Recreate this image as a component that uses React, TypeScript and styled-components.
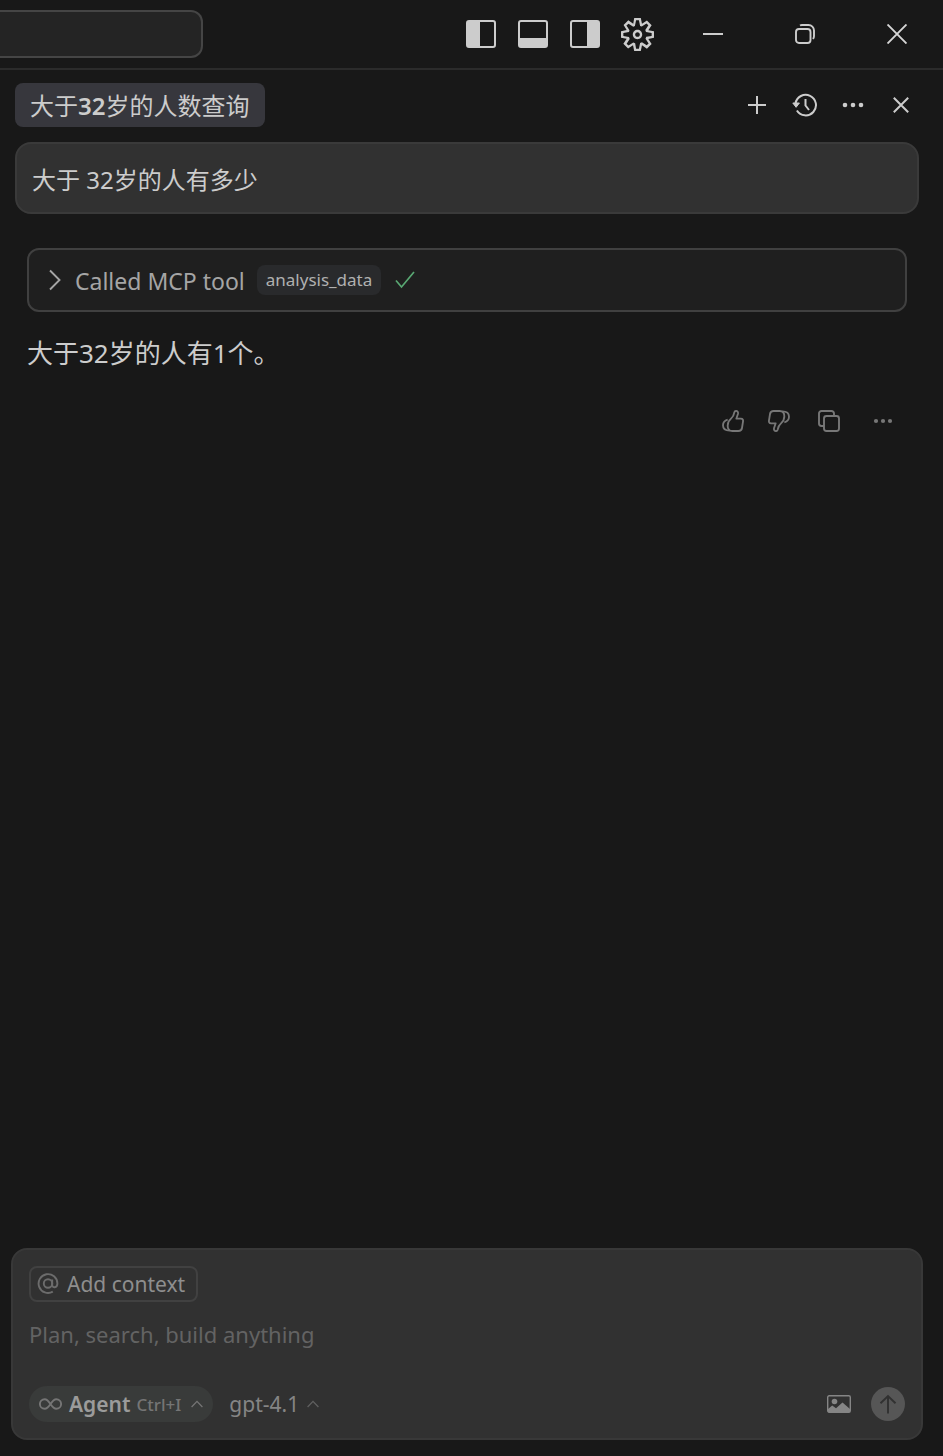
import React from "react";
import styled, { createGlobalStyle } from "styled-components";

const GlobalStyle = createGlobalStyle`
  *, *::before, *::after { box-sizing: border-box; }
  body {
    margin: 0;
    background: #181818;
    color: #cccccc;
    font-family: "Noto Sans", "Noto Sans CJK SC", sans-serif;
  }
  button, input, textarea { font: inherit; color: inherit; }
`;

const Window = styled.div`
  display: flex;
  flex-direction: column;
  min-height: 100vh;
`;

const TitleBar = styled.header`
  display: flex;
  align-items: center;
  height: 70px;
  border-bottom: 2px solid #2b2b2b;
`;

const CommandInput = styled.input`
  width: 203px;
  height: 48px;
  padding: 0 16px;
  border: 2px solid #454545;
  border-left: 0;
  border-radius: 0 12px 12px 0;
  background: #242424;
  outline: none;
`;

const LayoutControls = styled.div`
  display: flex;
  gap: 8px;
  margin: 0 8px 0 auto;
`;

const IconButton = styled.button<{ $width: number; $height?: number }>`
  display: flex;
  align-items: center;
  justify-content: center;
  flex: none;
  width: ${(p) => p.$width}px;
  height: ${(p) => p.$height ?? 32}px;
  padding: 0;
  border: 0;
  background: none;
`;

const Header = styled.div`
  display: flex;
  align-items: flex-start;
  justify-content: space-between;
  padding: 13px 26px 15px 15px;
`;

const ChatTab = styled.button`
  height: 44px;
  padding: 2px 16px 0 15px;
  border: 0;
  border-radius: 8px;
  background: #37373d;
  font-size: 24px;
  line-height: 42px;

  b { font-weight: 600; }
`;

const HeaderActions = styled.div`
  display: flex;
  align-items: center;
  gap: 16px;
  height: 44px;
`;

const UserMessage = styled.div`
  margin: 0 24px 0 15px;
  padding: 18px 15px 14px;
  border: 2px solid #3a3a3a;
  border-radius: 16px;
  background: #313131;
  font-size: 24px;
  line-height: 36px;
`;

const Conversation = styled.main`
  flex: 1;
  padding: 34px 36px 0 27px;
`;

const ToolCall = styled.button`
  display: flex;
  align-items: center;
  width: 100%;
  height: 64px;
  padding: 0 18px;
  border: 2px solid #404040;
  border-radius: 12px;
  background: #1f1f1f;
  color: #a5a5a5;
  text-align: left;
`;

const ToolLabel = styled.span`
  margin-left: 12px;
  padding-top: 2px;
  font-size: 23px;
`;

const ToolName = styled.code`
  height: 30px;
  margin: 0 13px 0 12px;
  padding: 0 9px;
  border-radius: 8px;
  background: #292a2c;
  color: #b0b0b0;
  font-family: inherit;
  font-size: 17px;
  line-height: 30px;
`;

const Answer = styled.p`
  margin: 21px 0 0;
  font-size: 26px;
  line-height: 40px;
`;

const Feedback = styled.div`
  display: flex;
  justify-content: flex-end;
  margin: 32px -3px 0 0;
  color: #777777;
`;

const Composer = styled.form`
  display: flex;
  flex-direction: column;
  align-items: flex-start;
  margin: 0 20px 16px 11px;
  padding: 16px;
  border: 2px solid #383838;
  border-radius: 16px;
  background: #313131;
`;

const ContextButton = styled.button`
  display: flex;
  align-items: center;
  gap: 8px;
  height: 36px;
  padding: 0 11px 0 6px;
  border: 2px solid #414141;
  border-radius: 8px;
  background: none;
  color: #8e8e8e;
  font-size: 21px;

  svg { color: #6c6c6c; }
`;

const Prompt = styled.textarea`
  display: block;
  width: 100%;
  height: 32px;
  margin: 16px 0 36px;
  padding: 0;
  border: 0;
  outline: none;
  resize: none;
  overflow: hidden;
  background: none;
  font-size: 22px;
  line-height: 32px;

  &::placeholder { color: #636363; opacity: 1; }
`;

const ComposerBar = styled.div`
  display: flex;
  align-items: center;
  width: 100%;
`;

const ModeButton = styled.button`
  display: flex;
  align-items: center;
  height: 36px;
  padding: 0 10px;
  border: 0;
  border-radius: 18px;
  background: #393b3a;
  color: #757575;
  font-size: 17px;
  font-weight: 500;

  strong {
    margin: 0 6px 0 7px;
    color: #9b9b9b;
    font-size: 21px;
    font-weight: 600;
  }
  svg:last-child { margin-left: 10px; }
`;

const ModelButton = styled.button`
  display: flex;
  align-items: center;
  gap: 8px;
  height: 36px;
  margin-left: 16px;
  padding: 0;
  border: 0;
  background: none;
  color: #858585;
  font-size: 21px;

  svg { color: #606060; }
`;

const SendButton = styled.button`
  display: flex;
  align-items: center;
  justify-content: center;
  width: 34px;
  height: 34px;
  margin-left: 16px;
  padding: 0;
  border: 0;
  border-radius: 50%;
  background: #565656;
  color: #313131;
`;

const Spacer = styled.div`
  flex: 1;
`;

type PanelSide = "left" | "bottom" | "right";

const panelFill: Record<PanelSide, string> = {
  left: "M1 1h12v26H1z",
  bottom: "M1 18h26v9H1z",
  right: "M16 1h11v26H16z",
};

function PanelIcon({ side }: { side: PanelSide }) {
  return (
    <svg width="30" height="28" viewBox="-1 0 30 28" fill="none">
      <rect x="0" y="1" width="28" height="26" rx="2" stroke="#cccccc" strokeWidth="2" />
      <path d={panelFill[side]} fill="#cccccc" />
    </svg>
  );
}

function GearIcon() {
  return (
    <svg width="33" height="33" viewBox="1 1 14 14" fill="currentColor">
      <path
        fillRule="evenodd"
        d="M9.1 4.4L8.6 2H7.4l-.5 2.4-.7.3-2-1.3-.9.8 1.3 2-.2.7-2.400.5v1.200l2.400.5.3.8-1.300 2 .8.8 2-1.300.8.3.4 2.300h1.200l.5-2.400.8-.3 2 1.300.8-.8-1.300-2 .3-.8 2.300-.4V7.400l-2.400-.5-.3-.8 1.300-2-.8-.8-2 1.300-.7-.2zM9.400 1l.5 2.400L12 2.100l2 2-1.400 2.100 2.400.4v2.800l-2.400.5L14 12l-2 2-2.100-1.400-.5 2.400H6.600l-.5-2.400L4 13.900l-2-2 1.400-2.100L1 9.400V6.600l2.400-.5L2.100 4l2-2 2.100 1.400.4-2.400h2.800zm.6 7c0 1.100-.9 2-2 2s-2-.9-2-2 .9-2 2-2 2 .9 2 2zM8 9c.6 0 1-.4 1-1s-.4-1-1-1-1 .4-1 1 .4 1 1 1z"
      />
    </svg>
  );
}

function HistoryIcon() {
  return (
    <svg width="26" height="24" viewBox="0 0 26 24" fill="none" stroke="currentColor" strokeWidth="2">
      <path d="M3.500 10.500A10.300 10.300 0 1 1 4.900 17.500" />
      <path d="M13.500 6v6.500L17 17" />
      <path d="M.8 10h6.600l-3.300 4.300z" fill="currentColor" strokeWidth="1" />
    </svg>
  );
}

function DotsIcon({ pitch, radius }: { pitch: number; radius: number }) {
  return (
    <svg width="24" height="8" viewBox="-12 -4 24 8" fill="currentColor">
      <circle cx={-pitch} r={radius} />
      <circle r={radius} />
      <circle cx={pitch} r={radius} />
    </svg>
  );
}

function ThumbIcon({ down }: { down?: boolean }) {
  return (
    <svg width="22" height="22" viewBox="0 0 66 66" fill="none" stroke="currentColor" strokeWidth="5.500" strokeLinejoin="round">
      <g transform={down ? "rotate(180 33 33)" : undefined}>
        <path d="M41 3C46 2 49 6 48 11L43 26H57C62 26 64 30 63 35L60 54C59 60 55 63 49 63H31C22 63 17 56 17 47C17 38 21 31 27 26C33 21 36 13 37 7C38 4 39 3 41 3Z" />
        <path d="M17 29C7 32 3 38 3 46C3 56 9 62 23 62" />
      </g>
    </svg>
  );
}

function CopyIcon() {
  return (
    <svg width="22" height="22" viewBox="0 0 22 22" fill="none" stroke="currentColor" strokeWidth="1.900">
      <rect x="6" y="6" width="15" height="15" rx="2.500" />
      <path d="M6 16H3.500A2.500 2.500 0 0 1 1 13.500V3.500A2.500 2.500 0 0 1 3.500 1H13.500A2.500 2.500 0 0 1 16 3.500V6" />
    </svg>
  );
}

function MentionIcon() {
  return (
    <svg width="22" height="22" viewBox="0 0 22 22" fill="none" stroke="currentColor" strokeWidth="1.900">
      <circle cx="11" cy="10.500" r="4.200" />
      <path d="M15.200 6.500v5.500c0 3.400 5.200 3.200 5.200-1.500A9.400 9.400 0 1 0 15.800 18.600" />
    </svg>
  );
}

function ChevronUp() {
  return (
    <svg width="12" height="8" viewBox="0 0 12 8" fill="none" stroke="currentColor" strokeWidth="1.300">
      <path d="M.6 7 6 1.400 11.400 7" />
    </svg>
  );
}

export default function App() {
  return (
    <>
      <GlobalStyle />
      <Window>
        <TitleBar>
          <CommandInput aria-label="Command center" />
          <LayoutControls>
            <IconButton $width={44} $height={44} aria-label="Toggle primary side bar">
              <PanelIcon side="left" />
            </IconButton>
            <IconButton $width={44} $height={44} aria-label="Toggle panel">
              <PanelIcon side="bottom" />
            </IconButton>
            <IconButton $width={44} $height={44} aria-label="Toggle secondary side bar">
              <PanelIcon side="right" />
            </IconButton>
            <IconButton $width={44} $height={44} aria-label="Settings">
              <GearIcon />
            </IconButton>
          </LayoutControls>
          <IconButton $width={92} $height={68} aria-label="Minimize">
            <svg width="20" height="20" viewBox="0 0 20 20">
              <path d="M0 9h20v2H0z" fill="#cccccc" />
            </svg>
          </IconButton>
          <IconButton $width={92} $height={68} aria-label="Restore">
            <svg width="20" height="20" viewBox="0 0 20 20" fill="none" stroke="#cccccc" strokeWidth="1.900">
              <rect x="1" y="5" width="14.500" height="14" rx="3" />
              <path d="M5 1.500C5.800 1 6.500 1 7 1h6.500A5.500 5.500 0 0 1 19 6.500V12c0 1.200-.4 2.300-1 3" />
            </svg>
          </IconButton>
          <IconButton $width={92} $height={68} aria-label="Close window">
            <svg width="20" height="20" viewBox="0 0 20 20" stroke="#d6d6d6" strokeWidth="1.900">
              <path d="M.5.5l19 19M19.500.5l-19 19" />
            </svg>
          </IconButton>
        </TitleBar>

        <Header>
          <ChatTab>
            大于<b>32</b>岁的人数查询
          </ChatTab>
          <HeaderActions>
            <IconButton $width={32} aria-label="New chat">
              <svg width="18" height="18" viewBox="0 0 18 18" stroke="currentColor" strokeWidth="2">
                <path d="M9 0v18M0 9h18" />
              </svg>
            </IconButton>
            <IconButton $width={32} aria-label="History"><HistoryIcon /></IconButton>
            <IconButton $width={32} aria-label="More"><DotsIcon pitch={8} radius={2.3} /></IconButton>
            <IconButton $width={32} aria-label="Close chat">
              <svg width="16" height="16" viewBox="0 0 16 16" stroke="currentColor" strokeWidth="2">
                <path d="M.8.8l14.400 14.400M15.200.8.8 15.200" />
              </svg>
            </IconButton>
          </HeaderActions>
        </Header>

        <UserMessage>大于 32岁的人有多少</UserMessage>

        <Conversation>
          <ToolCall>
            <svg width="16" height="22" viewBox="0 0 16 22" fill="none" stroke="currentColor" strokeWidth="1.900">
              <path d="M3 1.500 12.500 11 3 20.500" />
            </svg>
            <ToolLabel>Called MCP tool</ToolLabel>
            <ToolName>analysis_data</ToolName>
            <svg width="22" height="18" viewBox="0 0 22 18" fill="none" stroke="#59a873" strokeWidth="1.700">
              <path d="M2 9.500 7.500 16 20 1" />
            </svg>
          </ToolCall>
          <Answer>大于32岁的人有1个。</Answer>
          <Feedback>
            <IconButton $width={46} aria-label="Good response"><ThumbIcon /></IconButton>
            <IconButton $width={46} aria-label="Bad response"><ThumbIcon down /></IconButton>
            <IconButton $width={54} aria-label="Copy"><CopyIcon /></IconButton>
            <IconButton $width={54} aria-label="More actions"><DotsIcon pitch={7} radius={2.1} /></IconButton>
          </Feedback>
        </Conversation>

        <Composer>
          <ContextButton type="button">
            <MentionIcon />
            Add context
          </ContextButton>
          <Prompt aria-label="Message" placeholder="Plan, search, build anything" />
          <ComposerBar>
            <ModeButton type="button">
              <svg width="23" height="12" viewBox="0 0 23 12" fill="none" stroke="currentColor" strokeWidth="1.900">
                <path d="M11.500 6C9.500 3 8 1.200 5.700 1.200a4.800 4.800 0 0 0 0 9.600C8 10.800 9.500 9 11.500 6s3.500-4.800 5.800-4.800a4.800 4.800 0 0 1 0 9.600C15 10.800 13.500 9 11.500 6z" />
              </svg>
              <strong>Agent</strong>
              Ctrl+I
              <ChevronUp />
            </ModeButton>
            <ModelButton type="button">
              gpt-4.1
              <ChevronUp />
            </ModelButton>
            <Spacer />
            <IconButton type="button" $width={32} aria-label="Attach image">
              <svg width="24" height="18" viewBox="0 0 24 18">
                <rect x=".7" y=".7" width="22.600" height="16.600" rx="1.500" fill="none" stroke="#858585" strokeWidth="1.400" />
                <circle cx="7.500" cy="6.500" r="2.800" fill="#858585" />
                <path d="M1 14l4.200-3.500 3.800 2.700L15.500 7.500 23 14v3.300H1z" fill="#858585" />
              </svg>
            </IconButton>
            <SendButton type="button" aria-label="Send">
              <svg width="18" height="20" viewBox="0 0 18 20" fill="none" stroke="currentColor" strokeWidth="1.900">
                <path d="M9 19.500V2M1.500 9.300 9 2l7.500 7.300" />
              </svg>
            </SendButton>
          </ComposerBar>
        </Composer>
      </Window>
    </>
  );
}
